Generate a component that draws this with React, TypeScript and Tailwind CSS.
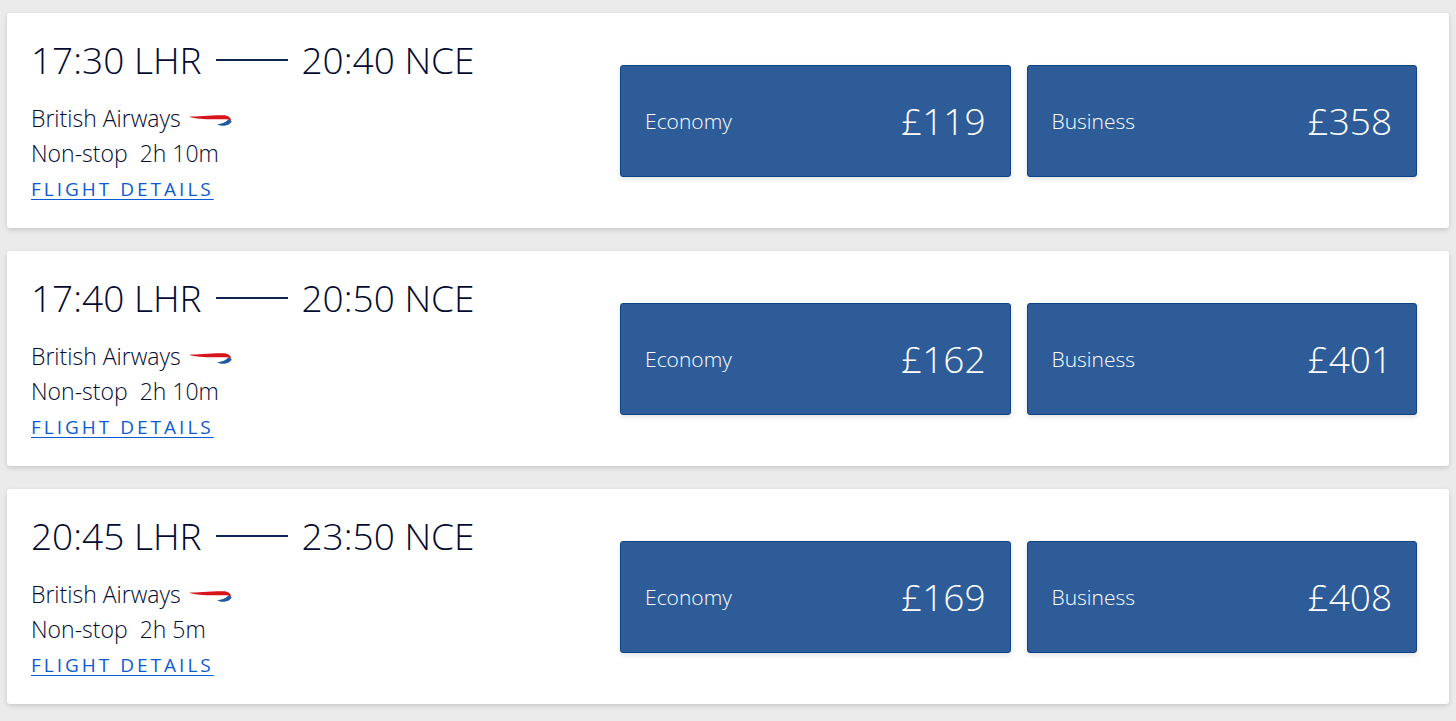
type Fare = {
  cabin: string;
  price: number;
};

type Flight = {
  id: string;
  departs: string;
  from: string;
  arrives: string;
  to: string;
  airline: string;
  stops: string;
  duration: string;
  fares: Fare[];
};

const flights: Flight[] = [
  {
    id: "lhr-nce-1730",
    departs: "17:30",
    from: "LHR",
    arrives: "20:40",
    to: "NCE",
    airline: "British Airways",
    stops: "Non-stop",
    duration: "2h 10m",
    fares: [
      { cabin: "Economy", price: 119 },
      { cabin: "Business", price: 358 },
    ],
  },
  {
    id: "lhr-nce-1740",
    departs: "17:40",
    from: "LHR",
    arrives: "20:50",
    to: "NCE",
    airline: "British Airways",
    stops: "Non-stop",
    duration: "2h 10m",
    fares: [
      { cabin: "Economy", price: 162 },
      { cabin: "Business", price: 401 },
    ],
  },
  {
    id: "lhr-nce-2045",
    departs: "20:45",
    from: "LHR",
    arrives: "23:50",
    to: "NCE",
    airline: "British Airways",
    stops: "Non-stop",
    duration: "2h 5m",
    fares: [
      { cabin: "Economy", price: 169 },
      { cabin: "Business", price: 408 },
    ],
  },
];

function SpeedmarqueIcon() {
  return (
    <svg viewBox="0 0 43 12" className="mt-1 h-3 w-[43px]" aria-hidden="true">
      <path
        d="M0 1.700C8 1.400 19 .4 33 .2c5.500-.1 8.600 1.500 9 4.800l-.4.900c-1.200-1.300-3.200-1.700-5.600-1.700C24 4.200 9 4.900 0 1.700Z"
        fill="#d5151b"
      />
      <path d="M28 9.400c4.200-.6 8.300-1.600 11-4.600 1.500.2 2.900.7 3.700 1.400C41.200 9.600 35.500 12.400 28 9.400Z" fill="#1f5aa0" />
    </svg>
  );
}

function FareButton({ fare }: { fare: Fare }) {
  return (
    <button
      type="button"
      className="flex h-28 items-center justify-between rounded-[3px] border border-[#0d4387] bg-[#2e5c99] px-6 text-white shadow-[0_2px_5px_rgba(0,0,0,0.12)]"
    >
      <span className="text-[21px] leading-8 font-light">{fare.cabin}</span>
      <span className="text-[37px] leading-12 font-light">£{fare.price}</span>
    </button>
  );
}

function FlightCard({ flight }: { flight: Flight }) {
  return (
    <article className="grid grid-cols-[17fr_23fr] items-center rounded-[3px] bg-white pt-[22px] pr-8 pb-[21px] pl-6 shadow-[0_2px_5px_rgba(0,0,0,0.15)]">
      <div>
        <h2 className="flex items-center gap-[14px] text-[37px] leading-[50px] font-light whitespace-nowrap">
          <span>
            {flight.departs} {flight.from}
          </span>
          <span className="h-0.5 w-18 bg-[#0b2450]" />
          <span>
            {flight.arrives} {flight.to}
          </span>
        </h2>
        <div className="mt-4 text-[23px] leading-[35px] font-light">
          <p className="flex items-center gap-2">
            {flight.airline}
            <SpeedmarqueIcon />
          </p>
          <p className="flex gap-3">
            <span>{flight.stops}</span>
            <span>{flight.duration}</span>
          </p>
        </div>
        <a
          href={`#${flight.id}`}
          className="block w-fit text-[19px] leading-9 tracking-[3px] text-[#0b5bd3] uppercase underline decoration-1 underline-offset-3"
        >
          Flight details
        </a>
      </div>
      <div className="grid grid-cols-2 gap-4">
        {flight.fares.map((fare) => (
          <FareButton key={fare.cabin} fare={fare} />
        ))}
      </div>
    </article>
  );
}

export default function App() {
  return (
    <main className="flex min-h-screen flex-col gap-[23px] bg-[#ebebeb] px-[7px] pt-[13px] pb-4 font-['Open_Sans',sans-serif] text-[#020b31]">
      {flights.map((flight) => (
        <FlightCard key={flight.id} flight={flight} />
      ))}
    </main>
  );
}
